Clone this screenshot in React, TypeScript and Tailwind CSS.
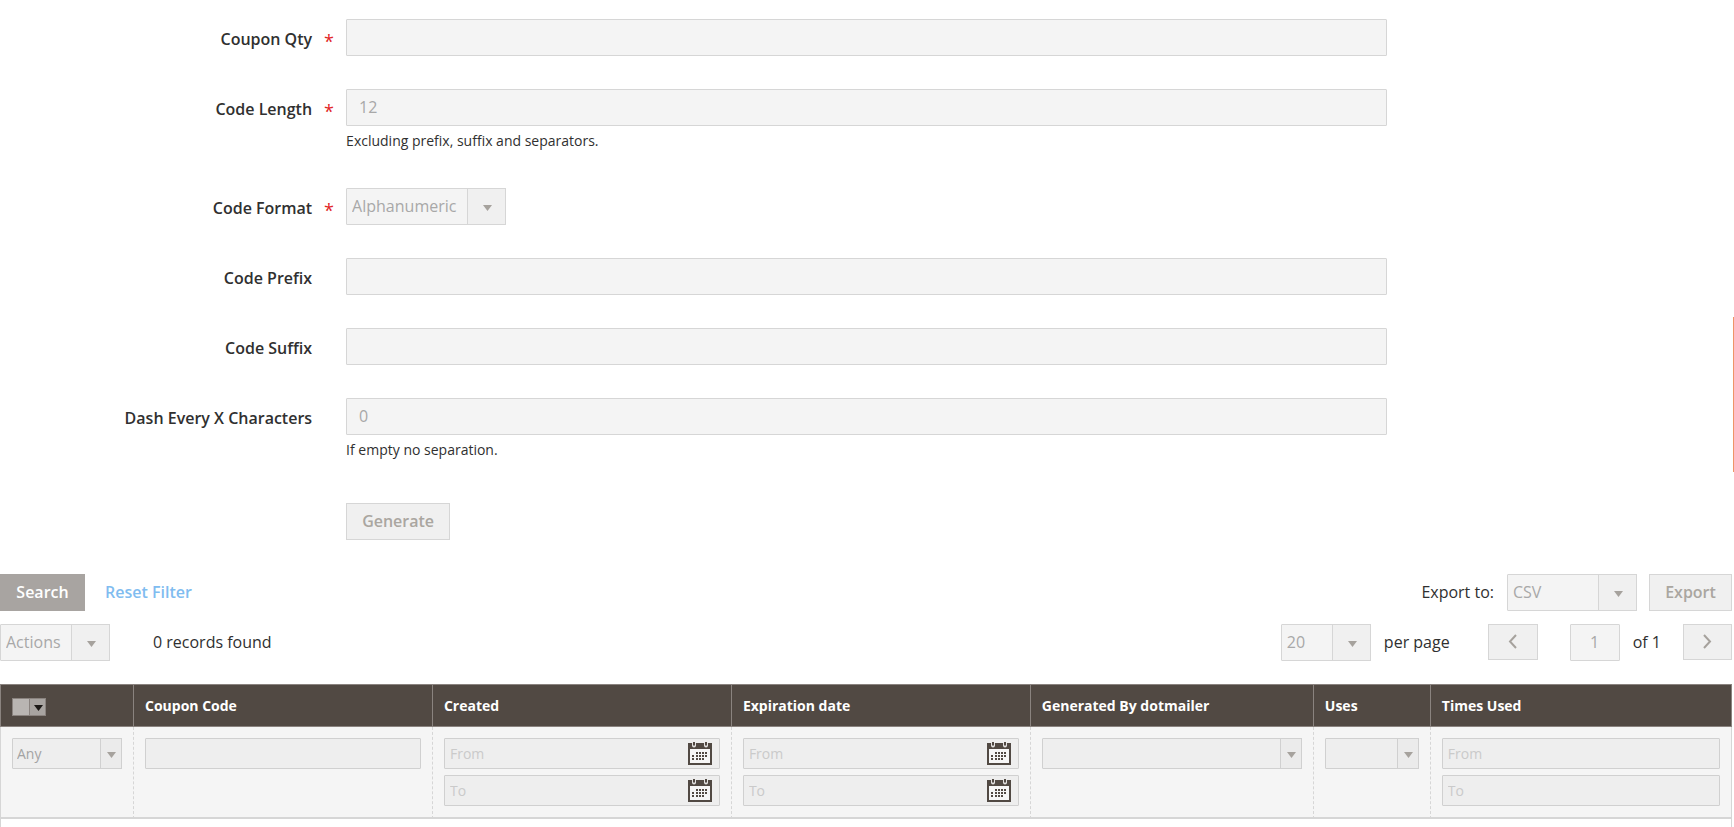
import type { ReactNode } from "react";

const MONTH_DOTS = [
  [8, 11], [11, 11], [14, 11], [17, 11],
  [4, 14], [8, 14], [11, 14], [14, 14], [17, 14],
  [4, 17], [8, 17], [11, 17], [14, 17],
];

function CalendarIcon() {
  return (
    <svg width="24" height="24" viewBox="0 0 24 24" aria-hidden="true">
      <path d="M0 2h24v22H0z" fill="#514943" />
      <path d="M2 8h20v14H2z" fill="#f6f6f6" />
      {[4, 16].map((x) => (
        <g key={x} transform={`translate(${x} 0)`}>
          <path d="M0 2v2.500a2 2 0 0 0 4 0V2z" fill="#e3e1e0" />
          <path d="M1 1h2v3.500H1z" fill="#514943" />
        </g>
      ))}
      {MONTH_DOTS.map(([x, y]) => (
        <rect key={`${x}-${y}`} x={x} y={y} width="2" height="2" fill="#514943" />
      ))}
    </svg>
  );
}

function Triangle({ className = "text-[#a6a29d]" }: { className?: string }) {
  return (
    <svg width="9" height="6" viewBox="0 0 9 6" className={className} aria-hidden="true">
      <path d="M0 0h9L4.500 6z" fill="currentColor" />
    </svg>
  );
}

interface SelectProps {
  id?: string;
  label?: string;
  value: string;
  className: string;
  small?: boolean;
}

function Select({ id, label, value, className, small }: SelectProps) {
  return (
    <div className={`relative ${className}`}>
      <select
        id={id}
        aria-label={label}
        disabled
        className={
          small
            ? "block h-[31px] w-full appearance-none rounded-[1px] border border-[#d0d0d0] bg-[#eeeeee] pr-6 pl-1 text-sm text-[#a3a3a3] opacity-100"
            : "block h-[37px] w-full appearance-none rounded-[1px] border border-[#d6d6d6] bg-[#f4f4f4] pr-10 pl-[5px] pb-[2px] text-base text-[#a8a8a8] opacity-100"
        }
      >
        <option>{value}</option>
      </select>
      <span
        className={
          small
            ? "pointer-events-none absolute inset-y-0 right-0 flex w-[22px] items-center justify-center border border-[#d0d0d0] bg-[#ebebeb] pt-[2px] pl-px"
            : "pointer-events-none absolute inset-y-0 right-0 flex w-[39px] items-center justify-center border border-[#d6d6d6] bg-[#f0f0f0] pt-[2px] pl-[2px]"
        }
      >
        <Triangle />
      </span>
    </div>
  );
}

interface FieldProps {
  id?: string;
  label?: string;
  required?: boolean;
  note?: string;
  children: ReactNode;
}

function Field({ id, label, required, note, children }: FieldProps) {
  return (
    <div className="flex items-start">
      <div className="w-[18%] shrink-0 pt-2 text-right leading-6 font-semibold">
        {label && <label htmlFor={id}>{label}</label>}
      </div>
      <div className="w-[34px] shrink-0 pt-[10px] pl-3 text-lg leading-6 text-[#e22626]">{required && "*"}</div>
      <div className="w-[60%]">
        {children}
        {note && <p className="pt-[5px] pb-1 text-sm leading-5">{note}</p>}
      </div>
    </div>
  );
}

function TextInput({ id, value = "" }: { id: string; value?: string }) {
  return (
    <input
      id={id}
      type="text"
      disabled
      defaultValue={value}
      className="block h-[37px] w-full rounded-[1px] border border-[#d6d6d6] bg-[#f4f4f4] px-3 pb-[2px] text-base text-[#a8a8a8]"
    />
  );
}

function FilterInput({ label, placeholder }: { label: string; placeholder?: string }) {
  return (
    <input
      type="text"
      disabled
      aria-label={label}
      placeholder={placeholder}
      className="block h-[31px] w-full min-w-0 rounded-[1px] border border-[#d0d0d0] bg-[#eeeeee] px-[5px] text-sm placeholder:text-[#cacaca]"
    />
  );
}

function RangeFilter({ name, calendar }: { name: string; calendar?: boolean }) {
  return (
    <div className="flex flex-col gap-[6px]">
      {["From", "To"].map((bound) => (
        <div key={bound} className="relative">
          <FilterInput label={`${name} ${bound}`} placeholder={bound} />
          {calendar && (
            <button type="button" aria-label={`${name} ${bound} calendar`} className="absolute top-[3px] right-2">
              <CalendarIcon />
            </button>
          )}
        </div>
      ))}
    </div>
  );
}

const COLUMNS: { title: string; width: string; filter: ReactNode }[] = [
  { title: "Coupon Code", width: "w-[17.26%]", filter: <FilterInput label="Coupon Code" /> },
  { title: "Created", width: "w-[17.26%]", filter: <RangeFilter name="Created" calendar /> },
  { title: "Expiration date", width: "w-[17.26%]", filter: <RangeFilter name="Expiration date" calendar /> },
  {
    title: "Generated By dotmailer",
    width: "w-[16.34%]",
    filter: <Select small label="Generated By dotmailer" value="" className="w-full" />,
  },
  { title: "Uses", width: "w-[117px]", filter: <Select small label="Uses" value="" className="w-full" /> },
  { title: "Times Used", width: "", filter: <RangeFilter name="Times Used" /> },
];

function CouponTable() {
  return (
    <table className="w-full table-fixed border-separate border-spacing-0 text-left">
      <thead>
        <tr className="bg-[#514943] text-white">
          <th className="h-[43px] w-[133px] border-y border-l border-[#8a837f] px-[11px]">
            <div className="mt-[2px] flex h-[18px] w-[34px] border border-[#8a837f]">
              <input
                type="checkbox"
                disabled
                aria-label="Select all"
                className="w-4 appearance-none bg-[#b9b5b2]"
              />
              <button
                type="button"
                aria-label="Selection options"
                className="flex flex-1 items-center justify-center border-l border-[#8a837f] bg-[#a8a4a1] pt-[2px] pl-px"
              >
                <Triangle className="text-[#1c1917]" />
              </button>
            </div>
          </th>
          {COLUMNS.map((c) => (
            <th
              key={c.title}
              className={`h-[43px] border-y border-l border-[#8a837f] px-[11px] text-sm font-bold last:border-r ${c.width}`}
            >
              {c.title}
            </th>
          ))}
        </tr>
      </thead>
      <tbody>
        <tr className="bg-[#f5f5f5] align-top">
          <td className="border-b-2 border-l border-[#d6d6d6] p-[11px]">
            <Select small label="Selected" value="Any" className="w-full" />
          </td>
          {COLUMNS.map((c) => (
            <td
              key={c.title}
              className="border-b-2 border-l border-[#d6d6d6] p-[11px] [border-left-style:dashed] last:border-r"
            >
              {c.filter}
            </td>
          ))}
        </tr>
        <tr>
          <td colSpan={7} className="h-2 border-x border-[#d6d6d6]" />
        </tr>
      </tbody>
    </table>
  );
}

const BUTTON = "h-[37px] border border-[#d6d6d6] bg-[#f0f0f0] pb-[2px] text-base font-semibold text-[#aaa6a0]";
const PAGER_BUTTON = "flex h-[36px] items-center justify-center self-start border border-[#d6d6d6] bg-[#f0f0f0] pb-[2px]";

function Chevron({ d }: { d: string }) {
  return (
    <svg width="9" height="15" viewBox="0 0 9 15" fill="none" stroke="#a6a29d" strokeWidth="2" aria-hidden="true">
      <path d={d} />
    </svg>
  );
}

export default function App() {
  return (
    <div className="relative bg-white font-['Open_Sans',sans-serif] text-base text-[#303030]">
      <form className="flex flex-col gap-[33px] pt-[19px]">
        <Field id="qty" label="Coupon Qty" required>
          <TextInput id="qty" />
        </Field>
        <Field id="length" label="Code Length" required note="Excluding prefix, suffix and separators.">
          <TextInput id="length" value="12" />
        </Field>
        <Field id="format" label="Code Format" required>
          <Select id="format" value="Alphanumeric" className="w-[160px]" />
        </Field>
        <Field id="prefix" label="Code Prefix">
          <TextInput id="prefix" />
        </Field>
        <Field id="suffix" label="Code Suffix">
          <TextInput id="suffix" />
        </Field>
        <Field id="dash" label="Dash Every X Characters" note="If empty no separation.">
          <TextInput id="dash" value="0" />
        </Field>
        <Field>
          <button type="button" disabled className={`mt-[6px] w-[104px] ${BUTTON}`}>
            Generate
          </button>
        </Field>
      </form>

      <section className="mt-[34px] mr-[2px]">
        <div className="flex items-center">
          <button type="button" disabled className="h-[37px] w-[85px] bg-[#a8a4a1] pb-[2px] font-semibold text-white">
            Search
          </button>
          <button type="button" disabled className="ml-5 pb-[2px] font-semibold text-[#80bcf0]">
            Reset Filter
          </button>
          <label htmlFor="export-type" className="mr-[13px] ml-auto pb-[2px]">
            Export to:
          </label>
          <Select id="export-type" value="CSV" className="w-[130px]" />
          <button type="button" disabled className={`ml-3 w-[83px] ${BUTTON}`}>
            Export
          </button>
        </div>

        <div className="mt-[13px] flex items-center">
          <Select label="Actions" value="Actions" className="w-[110px]" />
          <span className="ml-[43px] pb-[2px]">0 records found</span>
          <Select id="per-page" value="20" className="ml-auto w-[90px]" />
          <label htmlFor="per-page" className="ml-[13px] pb-[2px]">
            per page
          </label>
          <button type="button" disabled aria-label="Previous page" className={`ml-[38px] w-[50px] ${PAGER_BUTTON}`}>
            <Chevron d="M8 1 2 7.500 8 14" />
          </button>
          <input
            id="page"
            type="text"
            disabled
            defaultValue="1"
            className="ml-8 h-[37px] w-[50px] rounded-[1px] border border-[#d6d6d6] bg-[#f4f4f4] pb-[2px] text-center text-[#a8a8a8]"
          />
          <label htmlFor="page" className="ml-[13px] pb-[2px]">
            of 1
          </label>
          <button type="button" disabled aria-label="Next page" className={`ml-[22px] w-[49px] ${PAGER_BUTTON}`}>
            <Chevron d="M1 1 7 7.500 1 14" />
          </button>
        </div>

        <div className="mt-[23px]">
          <CouponTable />
        </div>
      </section>

      {/* scroll marker on the window edge */}
      <div className="absolute top-[317px] right-0 h-[155px] w-px bg-[#ef9467]" />
    </div>
  );
}
